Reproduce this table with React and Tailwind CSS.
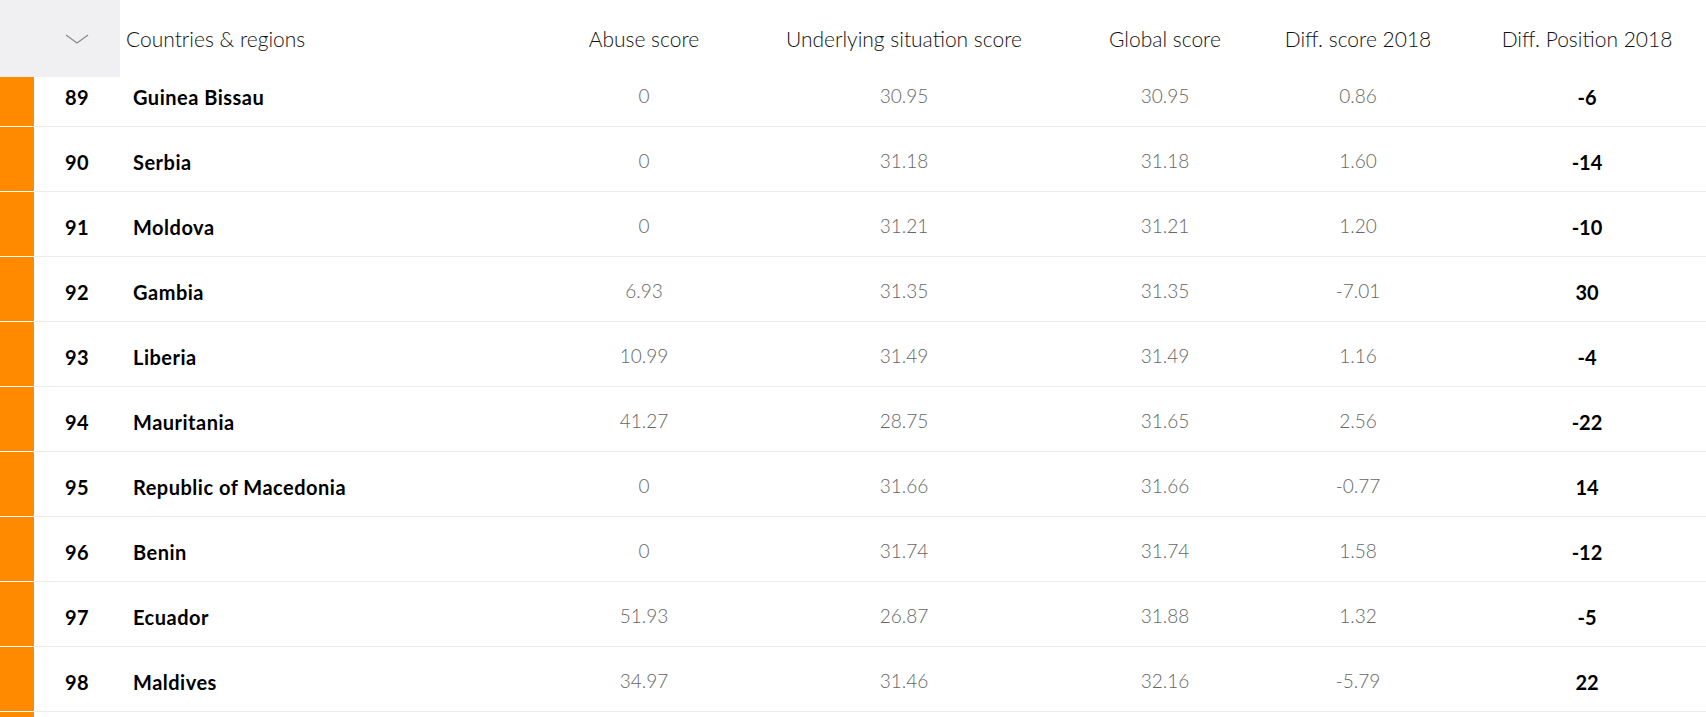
const rows = [
  { rank: "89", name: "Guinea Bissau", abuse: "0", under: "30.95", global: "30.95", diff: "0.86", pos: "-6" },
  { rank: "90", name: "Serbia", abuse: "0", under: "31.18", global: "31.18", diff: "1.60", pos: "-14" },
  { rank: "91", name: "Moldova", abuse: "0", under: "31.21", global: "31.21", diff: "1.20", pos: "-10" },
  { rank: "92", name: "Gambia", abuse: "6.93", under: "31.35", global: "31.35", diff: "-7.01", pos: "30" },
  { rank: "93", name: "Liberia", abuse: "10.99", under: "31.49", global: "31.49", diff: "1.16", pos: "-4" },
  { rank: "94", name: "Mauritania", abuse: "41.27", under: "28.75", global: "31.65", diff: "2.56", pos: "-22" },
  { rank: "95", name: "Republic of Macedonia", abuse: "0", under: "31.66", global: "31.66", diff: "-0.77", pos: "14" },
  { rank: "96", name: "Benin", abuse: "0", under: "31.74", global: "31.74", diff: "1.58", pos: "-12" },
  { rank: "97", name: "Ecuador", abuse: "51.93", under: "26.87", global: "31.88", diff: "1.32", pos: "-5" },
  { rank: "98", name: "Maldives", abuse: "34.97", under: "31.46", global: "32.16", diff: "-5.79", pos: "22" },
  // next row, only its top edge shows
  { rank: "", name: "", abuse: "", under: "", global: "", diff: "", pos: "" },
];

const App = () => {
  return (
    <div className="h-[717px] w-full overflow-hidden bg-white font-['Lato',sans-serif]">
      {/* Header */}
      <div className="sticky top-0 z-10 grid h-[77px] grid-cols-[34px_86px_424px_200px_296px_220px_200px_1fr] items-center bg-white text-[21px] font-light text-[#111]">
        <div className="col-span-2 flex h-full items-center justify-center bg-[#f0f0f2] pl-[34px]">
          <svg width="24" height="10" viewBox="0 0 24 10" fill="none">
            <path d="M1 1l11 8 11-8" stroke="#8a8a8a" strokeWidth="1.2" />
          </svg>
        </div>
        <div className="pl-[6px]">Countries &amp; regions</div>
        <div className="text-center">Abuse score</div>
        <div className="pl-[24px] text-center">Underlying situation score</div>
        <div className="pl-[30px] text-center">Global score</div>
        <div className="pr-[4px] text-center">Diff. score 2018</div>
        <div className="pl-[8px] text-center">Diff. Position 2018</div>
      </div>

      {/* Rows */}
      <div className="-mt-[15px]">
        {rows.map((r, i) => (
          <div key={i} className="grid h-[65px] grid-cols-[34px_1fr]">
            <div className="border-b border-white bg-[#ff8a00]" />
            <div className="grid grid-cols-[86px_424px_200px_296px_220px_200px_1fr] items-center border-b border-[#ececec] pt-[5px] text-[20px]">
              <div className="text-center font-bold tracking-wide text-black">{r.rank}</div>
              <div className="pl-[13px] font-bold tracking-wide text-black">{r.name}</div>
              <div className="text-center text-[19px] font-light text-[#666]">{r.abuse}</div>
              <div className="pl-[24px] text-center text-[19px] font-light text-[#666]">{r.under}</div>
              <div className="pl-[30px] text-center text-[19px] font-light text-[#666]">{r.global}</div>
              <div className="pr-[4px] text-center text-[19px] font-light text-[#666]">{r.diff}</div>
              <div className="pl-[8px] text-center font-bold text-black">{r.pos}</div>
            </div>
          </div>
        ))}
      </div>
    </div>
  );
};

export default App;
